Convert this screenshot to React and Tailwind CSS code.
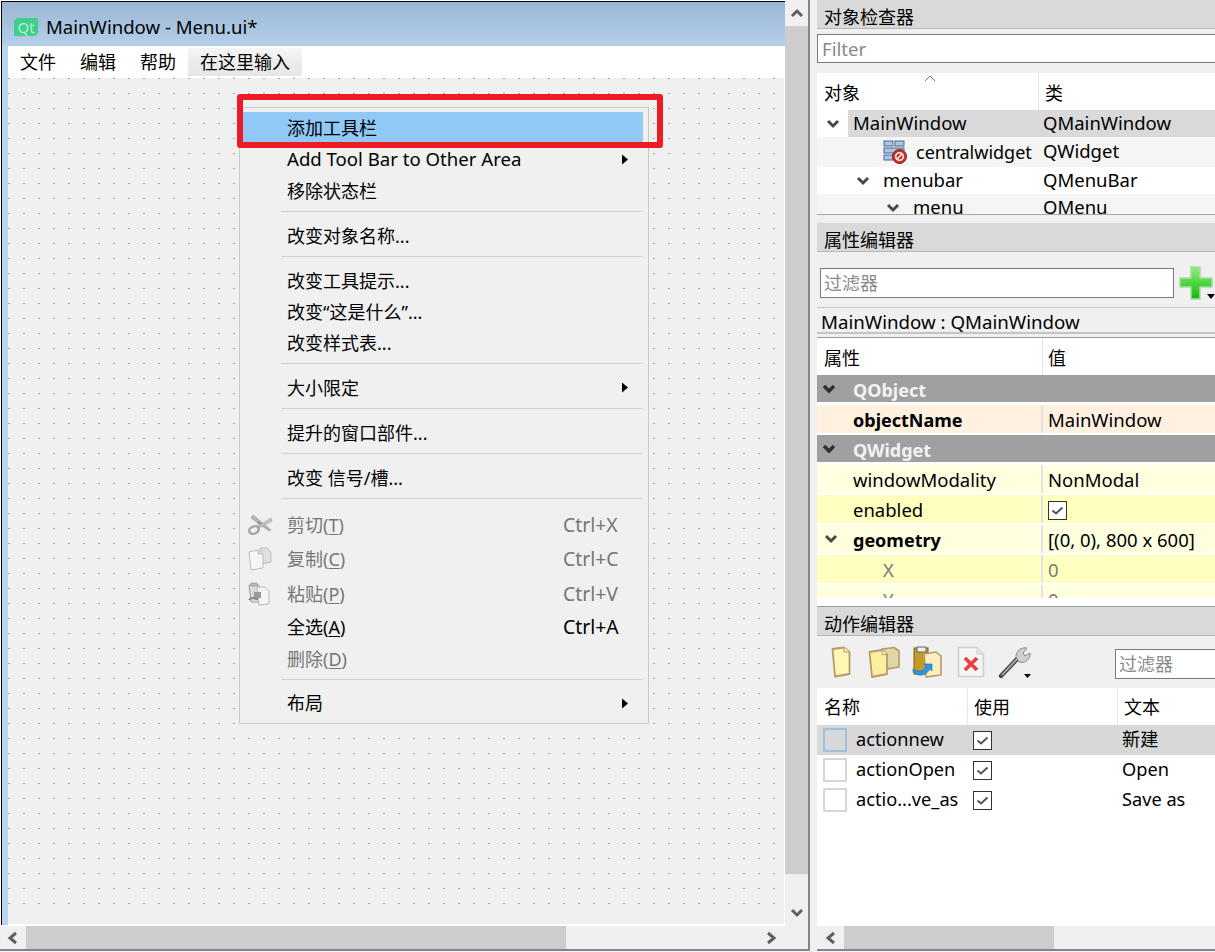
import React from 'react';

// small drawings used by the designer panels
function Chevron({ dir = 'down', size = 14, color = '#484848', width = 3 }) {
  const pts = {
    down: '2,4 7,9 12,4',
    up: '2,10 7,5 12,10',
    left: '10,2 4,7 10,12',
    right: '4,2 10,7 4,12',
  };
  return (
    <svg width={size} height={size} viewBox="0 0 14 14" className="shrink-0">
      <polyline points={pts[dir]} fill="none" stroke={color} strokeWidth={width} />
    </svg>
  );
}

function SubArrow() {
  return (
    <svg width="8" height="11" viewBox="0 0 8 11" className="shrink-0">
      <polygon points="1,0.5 7,5.5 1,10.5" fill="#000" />
    </svg>
  );
}

function Check() {
  return (
    <div className="w-[19px] h-[19px] border border-[#333] bg-white flex items-center justify-center shrink-0">
      <svg width="15" height="15" viewBox="0 0 15 15">
        <polyline points="2.5,7.5 6,10.5 12.5,4.5" fill="none" stroke="#555" strokeWidth="2" />
      </svg>
    </div>
  );
}

function Scissors() {
  return (
    <svg width="25" height="23" viewBox="0 0 25 23">
      <path d="M5 2 L23 17 L21 18 L3 5 Z" fill="#b4b4b4" stroke="#9a9a9a" strokeWidth="0.6" />
      <path d="M23 5 L10 13 L11 15 L24 8 Z" fill="#c4c4c4" stroke="#a0a0a0" strokeWidth="0.6" />
      <ellipse cx="6" cy="17" rx="5" ry="3.6" fill="none" stroke="#a4a4a4" strokeWidth="2.4" transform="rotate(-25 6 17)" />
      <circle cx="11" cy="10" r="1.5" fill="#8e8e8e" />
    </svg>
  );
}

function CopyDisabled() {
  return (
    <svg width="24" height="24" viewBox="0 0 24 24">
      <path d="M12 1 H19 L23 5 V15 L14 17 Z" fill="#e0e0e0" stroke="#bdbdbd" />
      <path d="M1 5 L10 3 L15 7 V21 L3 23 Z" fill="#f6f6f6" stroke="#bcbcbc" />
      <path d="M10 3 V7 H15" fill="#dddddd" stroke="#bcbcbc" />
    </svg>
  );
}

function PasteDisabled() {
  return (
    <svg width="22" height="24" viewBox="0 0 22 24">
      <path d="M1 3 H11 V20 H3 Z" fill="#dcdcdc" stroke="#9e9e9e" />
      <rect x="3" y="1" width="6" height="3" fill="#bdbdbd" stroke="#8e8e8e" strokeWidth="0.6" />
      <path d="M9 5 H17 L21 9 V22 L11 23 Z" fill="#f4f4f4" stroke="#b8b8b8" />
      <rect x="6" y="10" width="7" height="6" fill="#9a9a9a" />
      <path d="M1 18 C4 14 7 17 10 17" fill="none" stroke="#8a8a8a" strokeWidth="2" />
    </svg>
  );
}

function WidgetIcon() {
  return (
    <svg width="24" height="24" viewBox="0 0 24 24">
      <rect x="1" y="1" width="9" height="5" fill="#a9c6e6" stroke="#4d6b8c" />
      <rect x="12" y="1" width="9" height="5" fill="#a9c6e6" stroke="#4d6b8c" />
      <rect x="1" y="8" width="20" height="5" fill="#a9c6e6" stroke="#4d6b8c" />
      <rect x="1" y="15" width="9" height="5" fill="#a9c6e6" stroke="#4d6b8c" />
      <circle cx="16.5" cy="16.5" r="7" fill="#c9302c" stroke="#8f1b18" />
      <circle cx="16.5" cy="16.5" r="3.8" fill="none" stroke="#eee" strokeWidth="1.6" />
      <line x1="13.8" y1="19.2" x2="19.2" y2="13.8" stroke="#eee" strokeWidth="1.6" />
    </svg>
  );
}

function PlusIcon() {
  return (
    <svg width="34" height="34" viewBox="0 0 34 34">
      <defs>
        <linearGradient id="plusFill" x1="0" y1="0" x2="0" y2="1">
          <stop offset="0" stopColor="#8cf27c" />
          <stop offset="1" stopColor="#10b90e" />
        </linearGradient>
      </defs>
      <path d="M12 1 H21 V12 H33 V21 H21 V33 H12 V21 H1 V12 H12 Z" fill="url(#plusFill)" stroke="#a8dca0" strokeWidth="1.5" strokeLinejoin="round" />
    </svg>
  );
}

function NewDoc() {
  return (
    <svg width="20" height="32" viewBox="0 0 20 32">
      <path d="M1.5 3 L13 1.5 L18.5 6 V28 L4 30.5 Z" fill="#fdf7b4" stroke="#b79b63" strokeWidth="1.8" strokeLinejoin="round" />
      <path d="M13 1.5 V6 H18.5" fill="#f4f4f4" stroke="#b79b63" />
    </svg>
  );
}

function OpenDoc() {
  return (
    <svg width="32" height="32" viewBox="0 0 32 32">
      <path d="M14 3 L26 1.5 L31 5 V21 L20 23 Z" fill="#ddd8a6" stroke="#b79b63" strokeWidth="1.6" strokeLinejoin="round" />
      <path d="M1.5 6 L14 4 L19 8.5 V28 L4 31 Z" fill="#fdeea0" stroke="#b79b63" strokeWidth="1.8" strokeLinejoin="round" />
      <path d="M14 4 V8.5 H19" fill="#f4f4f4" stroke="#b79b63" />
    </svg>
  );
}

function SaveDoc() {
  return (
    <svg width="30" height="32" viewBox="0 0 30 32">
      <rect x="2" y="2" width="14" height="26" fill="#c49a28" stroke="#7d6420" />
      <rect x="5" y="1" width="9" height="5" fill="#eee" stroke="#666" />
      <path d="M12 8 L24 6 L29 10 V29 L14 31 Z" fill="#fbeec0" stroke="#b79b63" strokeWidth="1.6" strokeLinejoin="round" />
      <path d="M1 23 C6 27 12 25 14 20 L12 18 H20 V25 L18 23 C14 30 6 31 1 26 Z" fill="#2f93e0" stroke="#1c6fb4" strokeWidth="0.6" />
    </svg>
  );
}

function DeleteDoc() {
  return (
    <svg width="28" height="32" viewBox="0 0 28 32">
      <path d="M1.5 1.5 H20 L26.5 8 V30.5 H1.5 Z" fill="#f5f5f5" stroke="#cfcfcf" strokeWidth="1.6" />
      <path d="M20 1.5 V8 H26.5" fill="#e4e4e4" stroke="#cfcfcf" />
      <path d="M8 12 L20 24 M20 12 L8 24" stroke="#ec3c3c" strokeWidth="3.6" />
    </svg>
  );
}

function Wrench() {
  return (
    <svg width="34" height="34" viewBox="0 0 34 34">
      <path d="M3 31 L20 13" stroke="#4a4a4a" strokeWidth="4.4" strokeLinecap="round" />
      <path d="M4 30 L19 14" stroke="#b8b8b8" strokeWidth="1.4" />
      <path d="M18 12 C18 6 23 2 29 3 L25 8 L27 11 L32 8 C33 14 27 19 21 17 Z" fill="#cfcfcf" stroke="#8a8a8a" />
      <polygon points="26,29 33,29 29.5,33" fill="#000" />
    </svg>
  );
}

function TinyDown() {
  return (
    <svg width="8" height="5" viewBox="0 0 8 5" className="absolute right-0 bottom-[1px]">
      <polygon points="0,0 8,0 4,5" fill="#000" />
    </svg>
  );
}

const menuRows = [
  { label: '添加工具栏', h: 'h-[31px]', active: true },
  { label: 'Add Tool Bar to Other Area', h: 'h-[32px]', sub: true, latin: true },
  { label: '移除状态栏', h: 'h-[31px]' },
  { sep: true },
  { label: '改变对象名称...', h: 'h-[31px]' },
  { sep: true },
  { label: '改变工具提示...', h: 'h-[31px]' },
  { label: '改变“这是什么”...', h: 'h-[31px]' },
  { label: '改变样式表...', h: 'h-[31px]' },
  { sep: true },
  { label: '大小限定', h: 'h-[31px]', sub: true },
  { sep: true },
  { label: '提升的窗口部件...', h: 'h-[31px]' },
  { sep: true },
  { label: '改变 信号/槽...', h: 'h-[31px]' },
  { sep: true },
  { label: '剪切', key: 'T', keys: 'Ctrl+X', h: 'h-[35px]', off: true, icon: <Scissors /> },
  { label: '复制', key: 'C', keys: 'Ctrl+C', h: 'h-[34px]', off: true, icon: <CopyDisabled /> },
  { label: '粘贴', key: 'P', keys: 'Ctrl+V', h: 'h-[35px]', off: true, icon: <PasteDisabled /> },
  { label: '全选', key: 'A', keys: 'Ctrl+A', h: 'h-[32px]' },
  { label: '删除', key: 'D', h: 'h-[31px]', off: true },
  { sep: true },
  { label: '布局', h: 'h-[30px]', sub: true },
];

function ContextMenu() {
  return (
    <div className="absolute left-[239px] top-[107px] w-[410px] border border-[#c8c8c8] bg-[#f0f0f0] pl-[3px] pr-[5px] pt-[4px] pb-[5px] text-[18px] leading-none">
      {menuRows.map((r, i) =>
        r.sep ? (
          <div key={i} className="h-[14px] pt-[5px] pl-[38px]">
            <div className="h-px bg-[#d2d2d2]" />
          </div>
        ) : (
          <div
            key={i}
            className={`${r.h} flex items-center ${r.active ? 'bg-[#90c8f6]' : ''} ${r.off ? 'text-[#767676]' : 'text-black'}`}
          >
            <div className="w-[44px] pl-[5px] flex items-center shrink-0">{r.icon}</div>
            <span className={`whitespace-pre ${r.latin ? 'text-[18.6px]' : ''}`}>
              {r.label}
              {r.key && (
                <>
                  (<u className="underline-offset-2">{r.key}</u>)
                </>
              )}
            </span>
            {r.keys && <span className="ml-auto w-[80px] text-[19.4px]">{r.keys}</span>}
            {r.sub && (
              <span className="ml-auto w-[22px]">
                <SubArrow />
              </span>
            )}
          </div>
        )
      )}
    </div>
  );
}

function LeftPane() {
  return (
    <div className="w-[810px] h-[951px] shrink-0 flex flex-col border-r-2 border-b-2 border-[#84848c] bg-[#f0f0f0]">
      <div className="flex h-[926px]">
        <div className="w-[785px] shrink-0 pl-px pt-px bg-white">
          <div className="h-[924px] border-l border-t border-black bg-[#b9d4ec] flex flex-col">
            <div className="h-[44px] shrink-0 flex items-center pl-[12px] pt-[6px] bg-gradient-to-b from-[#9bb6d4] to-[#b5cfe9]">
              <div className="w-[24px] h-[18px] bg-[#41cd8c] [clip-path:polygon(3px_0,100%_0,100%_calc(100%-3px),calc(100%-3px)_100%,0_100%,0_3px)] flex items-center justify-center text-[15px] leading-none text-[#b6f0d2]">
                Qt
              </div>
              <span className="ml-[8px] text-[18.6px] leading-none text-black">MainWindow - Menu.ui*</span>
            </div>
            <div className="flex-1 pl-[6px] flex flex-col min-h-0">
              <div className="h-[32px] shrink-0 bg-white flex items-center pl-[12px] text-[18px] leading-none text-black">
                <span className="w-[60px]">文件</span>
                <span className="w-[60px]">编辑</span>
                <span className="w-[48px]">帮助</span>
                <span className="h-[28px] px-[12px] flex items-center bg-gradient-to-b from-[#f6f6f6] via-[#ececec] to-[#e6e6e6]">
                  在这里输入
                </span>
              </div>
              <div className="flex-1 bg-[#f0f0f0] border-r border-b border-white">
                <div className="w-[767px] h-[827px] bg-[linear-gradient(to_bottom,transparent_1px,#f0f0f0_1px),linear-gradient(to_right,#a4a4a4_2px,transparent_2px)] bg-[size:15px_15px]" />
              </div>
            </div>
          </div>
        </div>
        <div className="flex-1 flex flex-col items-center">
          <div className="h-[26px] flex items-center justify-center">
            <Chevron dir="up" color="#606060" />
          </div>
          <div className="w-full h-[848px] bg-[#cdcdcd]" />
          <div className="flex-1 flex items-end pb-[6px]">
            <Chevron dir="down" color="#606060" />
          </div>
        </div>
      </div>
      <div className="h-[23px] flex items-center">
        <div className="w-[26px] flex justify-center">
          <Chevron dir="left" color="#606060" />
        </div>
        <div className="w-[540px] h-full bg-[#cdcdcd]" />
        <div className="ml-[198px]">
          <Chevron dir="right" color="#606060" />
        </div>
      </div>
    </div>
  );
}

function DockTitle({ children }) {
  return (
    <div className="h-[29px] shrink-0 bg-[#d9d9d9] border-b border-[#b8b8b8] pl-[7px] pt-[6px] flex items-center text-[18px] leading-none text-black">
      {children}
    </div>
  );
}

function ObjectInspector() {
  return (
    <div className="h-[223px] shrink-0 flex flex-col">
      <DockTitle>对象检查器</DockTitle>
      <div className="mt-[5px] h-[29px] shrink-0 border border-[#7a7a7a] border-r-0 bg-white pl-[4px] pt-[2px] flex items-center text-[18.6px] leading-none text-[#8a8a8a]">
        Filter
      </div>
      <div className="mt-[10px] h-[142px] shrink-0 bg-white border-b border-[#a8a8a8] overflow-hidden text-[18.5px] leading-none text-black">
        <div className="h-[37px] flex relative text-[18px]">
          <div className="w-[222px] border-r border-[#e4e4e4] pl-[7px] pt-[11px]">对象</div>
          <div className="pl-[6px] pt-[11px]">类</div>
          <svg width="12" height="7" viewBox="0 0 12 7" className="absolute left-[107px] top-[2px]">
            <polyline points="1,6 6,1 11,6" fill="none" stroke="#707070" />
          </svg>
        </div>
        <div className="h-[27px] flex items-center">
          <div className="w-[31px] pl-[9px]">
            <Chevron />
          </div>
          <div className="flex-1 h-full flex items-center bg-[#d9d9d9] pl-[5px]">
            <span className="w-[190px]">MainWindow</span>
            <span>QMainWindow</span>
          </div>
        </div>
        <div className="h-[30px] flex items-center bg-[#f5f5f5]">
          <div className="w-[66px] pl-[66px]" />
          <WidgetIcon />
          <span className="ml-[9px] w-[127px] pb-[1px] text-[18px]">centralwidget</span>
          <span className="pb-[1px]">QWidget</span>
        </div>
        <div className="h-[27px] flex items-center">
          <div className="w-[66px] pl-[39px]">
            <Chevron />
          </div>
          <span className="w-[160px]">menubar</span>
          <span>QMenuBar</span>
        </div>
        <div className="h-[27px] flex items-center bg-[#f5f5f5]">
          <div className="w-[96px] pl-[69px]">
            <Chevron />
          </div>
          <span className="w-[130px]">menu</span>
          <span>QMenu</span>
        </div>
      </div>
    </div>
  );
}

function PropGroup({ children }) {
  return (
    <div className="h-[27px] mb-[3px] bg-[#a0a0a0] flex items-center pl-[5px] text-[18px] leading-none font-bold text-[#f2f2f2]">
      <div className="w-[31px]">
        <Chevron color="#303030" width={3.4} />
      </div>
      <span className="pt-[2px]">{children}</span>
    </div>
  );
}

function PropRow({ label, value, bg, bold, chevron, muted, indent, clip }) {
  return (
    <div className={`${clip ? 'h-[13px]' : 'h-[28px] mb-[2px]'} ${bg} flex overflow-hidden text-[18.5px] leading-none`}>
      <div className={`w-[226px] h-[28px] shrink-0 border-r-2 border-[#e2e2e2] flex items-center ${indent ? 'pl-[66px]' : 'pl-[36px]'} ${muted ? 'text-[#7a7a7a]' : 'text-black'} ${bold ? 'font-bold text-[18px]' : ''} relative`}>
        {chevron && (
          <span className="absolute left-[7px]">
            <Chevron />
          </span>
        )}
        <span className="pt-[2px]">{label}</span>
      </div>
      <div className={`h-[28px] pl-[5px] flex items-center ${muted ? 'text-[#7a7a7a]' : 'text-black'}`}>
        <span className="pt-[2px]">{value}</span>
      </div>
    </div>
  );
}

function PropertyEditor() {
  return (
    <div className="h-[384px] shrink-0 flex flex-col">
      <DockTitle>属性编辑器</DockTitle>
      <div className="h-[56px] shrink-0 border-b border-[#c8c8c8] flex items-center pl-[3px] pt-[6px]">
        <div className="w-[354px] h-[30px] border border-[#7a7a7a] bg-white pl-[3px] flex items-center text-[18px] leading-none text-[#8a8a8a]">
          过滤器
        </div>
        <div className="relative ml-[5px] w-[36px] h-[34px]">
          <PlusIcon />
          <TinyDown />
        </div>
      </div>
      <div className="h-[26px] shrink-0 border-b-2 border-[#c4c4c4] pl-[4px] pt-[5px] flex items-center text-[18.7px] leading-none text-black">
        MainWindow : QMainWindow
      </div>
      <div className="mt-[3px] flex-1 border-t border-b border-[#9a9a9a] bg-white overflow-hidden">
        <div className="h-[37px] flex text-[18px] leading-none text-black">
          <div className="w-[226px] border-r border-[#e2e2e2] pl-[7px] pt-[11px]">属性</div>
          <div className="pl-[5px] pt-[11px]">值</div>
        </div>
        <PropGroup>QObject</PropGroup>
        <PropRow label="objectName" value="MainWindow" bg="bg-[#fff0df]" bold />
        <PropGroup>QWidget</PropGroup>
        <PropRow label="windowModality" value="NonModal" bg="bg-[#ffffe0]" />
        <PropRow label="enabled" value={<Check />} bg="bg-[#ffffc0]" />
        <PropRow label="geometry" value="[(0, 0), 800 x 600]" bg="bg-[#ffffe0]" bold chevron />
        <PropRow label="X" value="0" bg="bg-[#ffffc0]" muted indent />
        <PropRow label="Y" value="0" bg="bg-[#ffffe0]" muted indent clip />
      </div>
    </div>
  );
}

const actions = [
  { name: 'actionnew', text: '新建', selected: true },
  { name: 'actionOpen', text: 'Open' },
  { name: 'actio...ve_as', text: 'Save as' },
];

function ActionEditor() {
  return (
    <div className="flex-1 flex flex-col min-h-0">
      <DockTitle>动作编辑器</DockTitle>
      <div className="h-[52px] shrink-0 flex items-center relative">
        <div className="ml-[14px] w-[37px]">
          <NewDoc />
        </div>
        <div className="w-[44px]">
          <OpenDoc />
        </div>
        <div className="w-[45px]">
          <SaveDoc />
        </div>
        <div className="w-[41px]">
          <DeleteDoc />
        </div>
        <Wrench />
        <div className="ml-[83px] mt-[4px] w-[100px] h-[30px] border border-[#7a7a7a] border-r-0 bg-white pl-[3px] flex items-center text-[18px] leading-none text-[#8a8a8a]">
          过滤器
        </div>
      </div>
      <div className="flex-1 bg-white text-[18.2px] leading-none text-black">
        <div className="h-[37px] flex text-[18px]">
          <div className="w-[151px] border-r border-[#e4e4e4] pl-[7px] pt-[10px]">名称</div>
          <div className="w-[150px] border-r border-[#e4e4e4] pl-[6px] pt-[10px]">使用</div>
          <div className="pl-[6px] pt-[10px]">文本</div>
        </div>
        {actions.map((a) => (
          <div key={a.name} className={`h-[30px] flex items-center ${a.selected ? 'bg-[#d8d8d8]' : ''}`}>
            <div className="w-[150px] flex items-center pl-[6px]">
              <div className={`w-[24px] h-[24px] border-2 ${a.selected ? 'border-[#9fc0dc]' : 'border-[#d6d6d6]'}`} />
              <span className="ml-[9px] pb-[2px]">{a.name}</span>
            </div>
            <div className="w-[150px] pl-[6px]">
              <Check />
            </div>
            <span className="pl-[5px] pb-[2px]">{a.text}</span>
          </div>
        ))}
      </div>
    </div>
  );
}

function RightPane() {
  return (
    <div className="flex-1 h-[951px] flex flex-col ml-[7px] min-w-0">
      <div className="h-[926px] flex flex-col bg-[#f0f0f0]">
        <ObjectInspector />
        <PropertyEditor />
        <ActionEditor />
      </div>
      <div className="h-[23px] flex items-center bg-[#f0f0f0]">
        <div className="w-[27px] flex justify-center">
          <Chevron dir="left" color="#606060" />
        </div>
        <div className="w-[210px] h-full bg-[#cdcdcd]" />
      </div>
      <div className="h-[2px] bg-[#84848c]" />
    </div>
  );
}

export default function App() {
  return (
    <div className="relative w-[1215px] h-[952px] overflow-hidden flex bg-[#f0f0f0] font-['Noto_Sans','Noto_Sans_CJK_SC',sans-serif]">
      <LeftPane />
      <RightPane />
      <ContextMenu />
      <div className="absolute left-[237px] top-[94px] w-[426px] h-[54px] border-[6px] border-[#ed1c24] rounded-[3px]" />
    </div>
  );
}
